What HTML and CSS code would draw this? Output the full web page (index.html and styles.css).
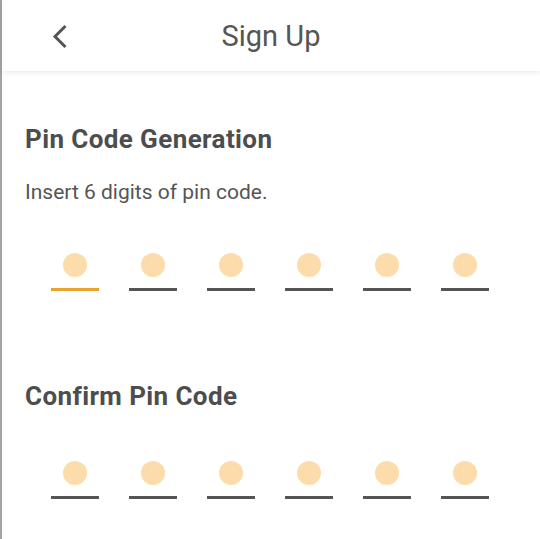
FILE: index.html
```html
<!DOCTYPE html>
<html lang="en">
<head>
    <meta charset="UTF-8">
    <meta name="viewport" content="width=device-width, initial-scale=1.0">
    <title>Sign Up</title>
    <link rel="stylesheet" href="styles.css">
</head>
<body>
    <div class="screen">
        <header class="topbar">
            <button class="back" aria-label="Back">
                <svg width="18" height="24" viewBox="0 0 18 24">
                    <path d="M14.5 2 L4 12.5 L14.5 23" fill="none" stroke="#555" stroke-width="3"/>
                </svg>
            </button>
            <h1>Sign Up</h1>
            <span></span>
        </header>
        <main>
            <section class="block">
                <h2>Pin Code Generation</h2>
                <p class="hint">Insert 6 digits of pin code.</p>
                <div class="pins">
                    <div class="pin active"><span class="dot"></span><span class="line"></span></div>
                    <div class="pin"><span class="dot"></span><span class="line"></span></div>
                    <div class="pin"><span class="dot"></span><span class="line"></span></div>
                    <div class="pin"><span class="dot"></span><span class="line"></span></div>
                    <div class="pin"><span class="dot"></span><span class="line"></span></div>
                    <div class="pin"><span class="dot"></span><span class="line"></span></div>
                </div>
            </section>
            <section class="block confirm">
                <h2>Confirm Pin Code</h2>
                <div class="pins">
                    <div class="pin"><span class="dot"></span><span class="line"></span></div>
                    <div class="pin"><span class="dot"></span><span class="line"></span></div>
                    <div class="pin"><span class="dot"></span><span class="line"></span></div>
                    <div class="pin"><span class="dot"></span><span class="line"></span></div>
                    <div class="pin"><span class="dot"></span><span class="line"></span></div>
                    <div class="pin"><span class="dot"></span><span class="line"></span></div>
                </div>
            </section>
        </main>
    </div>
</body>
</html>
```

FILE: styles.css
```css
body {
    margin: 0;
    font-family: Roboto, "Liberation Sans", sans-serif;
    color: #4d4d4d;
    background: #fff;
}
.screen {
    min-height: 539px;
    border-left: 2px solid #a3a3a3;
    box-sizing: border-box;
}
.topbar {
    height: 71px;
    display: grid;
    grid-template-columns: 1fr auto 1fr;
    align-items: center;
    background: #fff;
    box-shadow: 0 2px 5px rgba(0, 0, 0, 0.08);
}
.back {
    justify-self: start;
    margin-left: 49px;
    padding: 0;
    border: none;
    background: none;
    display: flex;
    cursor: pointer;
}
.topbar h1 {
    margin: 0;
    font-size: 29px;
    font-weight: 400;
    line-height: 34px;
    color: #555;
}
main {
    padding: 52px 0 0 23px;
}
.block h2 {
    margin: 0;
    font-size: 26px;
    font-weight: 700;
    line-height: 32px;
    letter-spacing: 0.4px;
    color: #4d4d4d;
}
.hint {
    margin: 25px 0 0;
    font-size: 21px;
    line-height: 25px;
    color: #555;
}
.pins {
    display: flex;
    gap: 30px;
    margin-top: 48px;
    padding-left: 26px;
}
.pin {
    width: 48px;
    display: flex;
    flex-direction: column;
    align-items: center;
    gap: 11px;
}
.dot {
    width: 24px;
    height: 24px;
    border-radius: 50%;
    background: #fddcab;
}
.line {
    width: 48px;
    height: 3px;
    background: #555;
}
.pin.active .line {
    background: #e8a330;
}
.confirm {
    margin-top: 89px;
}
.confirm .pins {
    margin-top: 49px;
}
```
